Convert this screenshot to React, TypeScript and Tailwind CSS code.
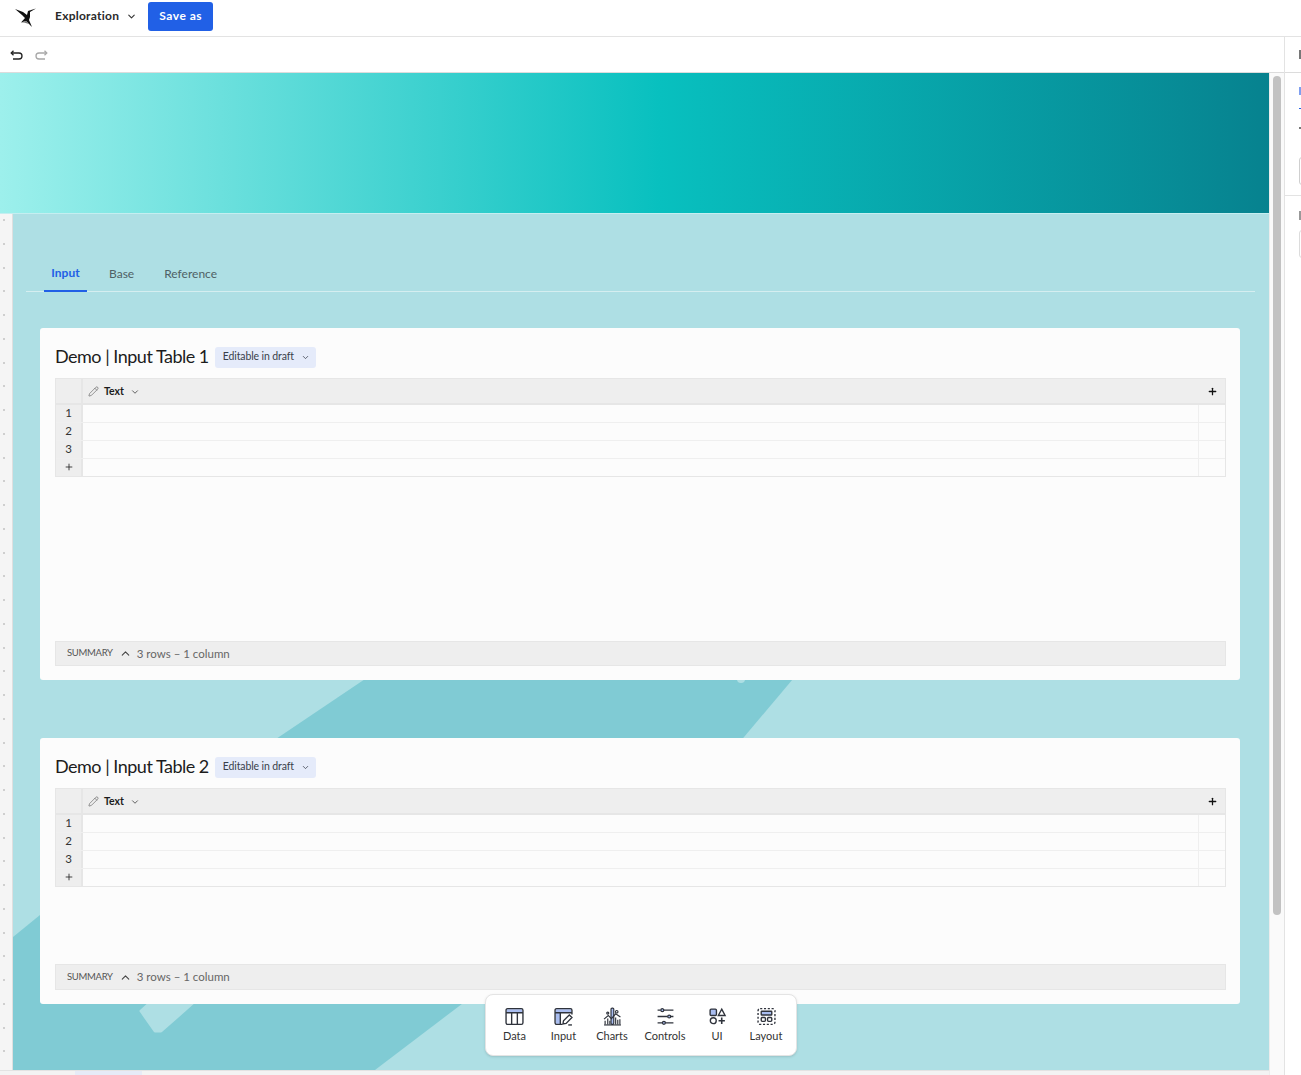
import React from 'react';
import { ChevronDown, ChevronUp, Pencil, Plus } from 'lucide-react';

const font = "font-['Lato','Noto_Sans',sans-serif]";

const Logo = () => (
    <svg width="22" height="20" viewBox="0 0 22 20" fill="none">
        <path d="M0 1 L8 4 L12 7 L13 3 L21 0.5 L15 4 L15 9 L14 12 L17 19 L14 16 L11 13 L6 14.5 L10 10 L7 7 Z" fill="#111" />
        <path d="M13 3 L21 0.5 L15 2.5 Z" fill="#555" />
        <path d="M6 14.5 L11 13 L14 16 L9 14.5 Z" fill="#777" />
    </svg>
);

const UndoIcon = ({ className }: { className: string }) => (
    <svg className={className} width="13" height="10" viewBox="0 0 13 10" fill="none" stroke="currentColor" strokeWidth="1.3">
        <path d="M1.5 3H9a3 3 0 0 1 0 6H3" />
        <path d="M3.5 0.8 L1.2 3 L3.5 5.2" />
    </svg>
);

const DataIcon = () => (
    <svg width="19" height="19" viewBox="0 0 18 18" fill="none" stroke="#2f333c" strokeWidth="1.3">
        <rect x="1.6" y="2.1" width="14.8" height="3.4" fill="#a9bdf0" stroke="none" />
        <rect x="1" y="1.5" width="16" height="15" rx="1.5" />
        <path d="M1 5.5H17M6.3 5.5V16.5M11.7 5.5V16.5" />
    </svg>
);

const InputIcon = () => (
    <svg width="19" height="19" viewBox="0 0 18 18" fill="none" stroke="#2f333c" strokeWidth="1.3">
        <rect x="1.6" y="2.1" width="14.8" height="3.4" fill="#a9bdf0" stroke="none" />
        <rect x="1.6" y="5.5" width="4.4" height="10.4" fill="#a9bdf0" stroke="none" />
        <path d="M8 16.5H2.5a1.5 1.5 0 0 1-1.5-1.5V3a1.5 1.5 0 0 1 1.5-1.5h13A1.5 1.5 0 0 1 17 3v4" />
        <path d="M1 5.5H17M6 5.5V16.5" />
        <path d="M8.5 16 L9 13 L14.5 7.5 L17 10 L11.5 15.5 Z" fill="#fff" />
        <path d="M13.5 17H17" />
    </svg>
);

const ChartsIcon = () => (
    <svg width="19" height="19" viewBox="0 0 18 18" fill="none" stroke="#2f333c" strokeWidth="1.1">
        <rect x="7.6" y="1" width="2.6" height="15.5" rx="1" fill="#a9bdf0" />
        <path d="M1 11.5 L5 8 L8 11 L12 6.5 L16.5 9.5" />
        <circle cx="13" cy="4.5" r="1.2" />
        <circle cx="4.5" cy="5.8" r="1" />
        <path d="M2 16.5V13M4.5 16.5V11M6.5 16.5V13M12 16.5V10M14 16.5V12M16 16.5V11.5" />
        <path d="M1 17H17" />
    </svg>
);

const ControlsIcon = () => (
    <svg width="19" height="19" viewBox="0 0 18 18" fill="none" stroke="#2f333c" strokeWidth="1.2">
        <path d="M1.5 3H4.5M7.5 3H16.5M1.5 9H11M14 9H16.5M1.5 15H6M9 15H16.5" />
        <circle cx="6" cy="3" r="1.4" fill="#a9bdf0" />
        <circle cx="12.5" cy="9" r="1.4" fill="#a9bdf0" />
        <circle cx="7.5" cy="15" r="1.4" fill="#a9bdf0" />
    </svg>
);

const UiIcon = () => (
    <svg width="19" height="19" viewBox="0 0 18 18" fill="none" stroke="#2f333c" strokeWidth="1.3">
        <rect x="2" y="2" width="6" height="6" rx="1" fill="#a9bdf0" />
        <path d="M13 2 L16.2 8 H9.8 Z" />
        <circle cx="5" cy="13" r="2.8" />
        <path d="M13 10V16M10 13H16" strokeWidth="1.5" />
    </svg>
);

const LayoutIcon = () => (
    <svg width="19" height="19" viewBox="0 0 18 18" fill="none" stroke="#2f333c" strokeWidth="1.3">
        <rect x="1" y="1.5" width="16" height="15" rx="2" strokeDasharray="2 1.6" />
        <rect x="4" y="4" width="10" height="3.6" rx="0.5" fill="#a9bdf0" />
        <rect x="4" y="10" width="4" height="3.6" rx="1" />
        <rect x="10" y="10" width="4" height="3.6" rx="1" />
    </svg>
);

const dockItems = [
    { label: 'Data', icon: <DataIcon />, width: 'w-[49px]' },
    { label: 'Input', icon: <InputIcon />, width: 'w-[49px]' },
    { label: 'Charts', icon: <ChartsIcon />, width: 'w-[48px]' },
    { label: 'Controls', icon: <ControlsIcon />, width: 'w-[58px]' },
    { label: 'UI', icon: <UiIcon />, width: 'w-[46px]' },
    { label: 'Layout', icon: <LayoutIcon />, width: 'w-[52px]' },
];

const rows = [
    { label: '1', cls: 'h-[18px] border-b border-[#efefef]' },
    { label: '2', cls: 'h-[18px] border-b border-[#efefef]' },
    { label: '3', cls: 'h-[18px] border-b border-[#efefef]' },
    { label: '+', cls: 'h-[17px]' },
];

const InputTable = ({ title, height, summary }: { title: string; height: string; summary: string }) => (
    <div className={`bg-[#fcfcfc] rounded-[3px] px-[15px] pr-[14px] flex flex-col ${height}`}>
        <div className="h-[50px] flex items-center gap-[6px] shrink-0 pt-[8px]">
            <h3 className="text-[18px] leading-none text-[#1c1c1c] whitespace-nowrap tracking-[-0.5px] pb-[2px]">{title}</h3>
            <span className="h-[21px] w-[101px] bg-[#e5ebfa] rounded-[3px] flex items-center pl-[8px] gap-[7px] text-[10.5px] tracking-[-0.12px] text-[#3a3f4b] whitespace-nowrap">
                Editable in draft
                <ChevronDown className="w-[9px] h-[9px]" />
            </span>
        </div>

        <div className="border border-[#e6e6e6]">
            <div className="flex h-[26px] bg-[#eeeeee] border-b-2 border-[#e6e6e6]">
                <div className="w-[27px] border-r-2 border-[#e6e6e6]" />
                <div className="flex-1 flex items-center pl-[5px] pt-[1px] gap-[5px] text-[10.5px] font-bold text-[#1c1c1c]">
                    <Pencil className="w-[11px] h-[11px] text-[#555]" strokeWidth={1.3} />
                    Text
                    <ChevronDown className="w-[10px] h-[10px] ml-[1px] text-[#444]" />
                </div>
                <div className="w-[26px] flex items-center justify-center">
                    <Plus className="w-[11px] h-[11px] text-[#111]" strokeWidth={2.8} />
                </div>
            </div>
            {rows.map((row) => (
                <div key={row.label} className={`flex ${row.cls}`}>
                    <div className="w-[27px] bg-[#eeeeee] border-r-2 border-[#e6e6e6] flex items-center justify-center text-[11.5px] text-[#333] pb-[1px]">
                        {row.label === '+' ? <Plus className="w-[10px] h-[10px] text-[#222]" strokeWidth={2} /> : row.label}
                    </div>
                    <div className="flex-1 border-r border-[#efefef]" />
                    <div className="w-[26px]" />
                </div>
            ))}
        </div>

        <div className={`mt-auto mb-[14px] ${summary} bg-[#eeeeee] border border-[#e6e6e6] flex items-center pl-[11px] text-[#666]`}>
            <span className="text-[9.5px] text-[#555] tracking-[-0.3px]">SUMMARY</span>
            <ChevronUp className="w-[13px] h-[13px] ml-[6px] text-[#444]" />
            <span className="ml-[5px] text-[11.5px]">3 rows – 1 column</span>
        </div>
    </div>
);

export default function App() {
    return (
        <div className={`${font} w-[1301px] h-[1075px] overflow-hidden bg-white flex flex-col`}>
            <header className="h-[37px] shrink-0 border-b border-[#e3e3e3] flex items-center pl-[15px] pb-[3px]">
                <div className="pt-[3px] h-[20px] flex items-center"><Logo /></div>
                <span className="ml-[18px] mb-[1px] text-[12px] font-bold text-[#2a2a2a] tracking-[0.25px]">Exploration</span>
                <ChevronDown className="w-[11px] h-[11px] ml-[7px] text-[#333]" strokeWidth={2.4} />
                <button className="ml-[11px] w-[65px] h-[29px] rounded-[3px] bg-[#2160e6] text-white text-[12px] font-bold tracking-[0.5px] pb-[1px]">
                    Save as
                </button>
            </header>

            <div className="flex-1 flex min-h-0">
                <div className="w-[1285px] shrink-0 flex flex-col border-r border-[#e3e3e3]">
                    <div className="h-[36px] shrink-0 border-b border-[#dcdcdc] flex items-center pl-[10px] gap-[12px]">
                        <UndoIcon className="text-[#222]" />
                        <UndoIcon className="text-[#a8a8a8] -scale-x-100" />
                    </div>

                    <div className="flex-1 flex min-h-0">
                        <main className="w-[1269px] shrink-0 flex flex-col relative overflow-hidden bg-[#aedfe4]">
                            <svg className="absolute left-0 top-0" width="1269" height="1002" viewBox="0 0 1269 1002">
                                <polygon points="374,600 798,600 739,670 270,670" fill="#80cbd4" />
                                <circle cx="741" cy="606" r="4" fill="#aedfe4" />
                                <polygon points="13,864 40,842 579,842 375,997 13,997" fill="#80cbd4" />
                                <polygon points="152,928 195,928 161,958 155,958 141,938" fill="#aedfe4" stroke="#aedfe4" strokeWidth="3" strokeLinejoin="round" />
                            </svg>
                            <div className="h-[141px] shrink-0 relative bg-[linear-gradient(90deg,#9df0ec_0%,#08c0bf_52%,#07828f_100%)] border-b border-[#c5eef0]" />
                            <div className="flex-1 flex min-h-0 relative">
                                <div className="w-[13px] shrink-0 bg-[#f5f5f5] border-r border-[#dfdfdf] flex flex-col gap-[21.75px] pt-[5px] pl-[3px]">
                                    {Array.from({ length: 37 }).map((_, i) => (
                                        <span key={i} className="w-[2px] h-[2px] shrink-0 bg-[#cfcfcf]" />
                                    ))}
                                </div>
                                <div className="flex-1 flex flex-col pl-[27px] pr-[29px]">
                                    <nav className="mt-[42px] h-[36px] ml-[-14px] mr-[-15px] border-b border-[#d5eef0] flex pl-[18px] text-[12px]">
                                        <span className="w-[43px] h-[36px] pb-[1px] flex items-center justify-center text-[#2160e6] font-bold border-b-2 border-[#2160e6]">Input</span>
                                        <span className="ml-[22px] h-[36px] pb-[1px] flex items-center text-[#4f6165]">Base</span>
                                        <span className="ml-[30px] h-[36px] pb-[1px] flex items-center text-[#4f6165]">Reference</span>
                                    </nav>
                                    <div className="mt-[36px] flex flex-col gap-[58px]">
                                        <InputTable title="Demo | Input Table 1" height="h-[352px]" summary="h-[25px]" />
                                        <InputTable title="Demo | Input Table 2" height="h-[266px]" summary="h-[26px]" />
                                    </div>
                                </div>
                                <div className="absolute left-[485px] top-[780px] w-[312px] h-[62px] bg-white rounded-[8px] border border-[#e4e4e4] shadow-sm flex items-center pl-[4px]">
                                    {dockItems.map((item) => (
                                        <div key={item.label} className={`${item.width} flex flex-col items-center gap-[3px]`}>
                                            {item.icon}
                                            <span className="text-[11px] leading-[14px] text-[#333]">{item.label}</span>
                                        </div>
                                    ))}
                                </div>
                            </div>
                            <div className="h-[5px] shrink-0 relative bg-[#f3f3f3] border-t border-[#e3e3e3] pl-[75px]">
                                <div className="w-[67px] h-full bg-[#e6ebf7]" />
                            </div>
                        </main>
                        <div className="w-[15px] bg-[#fafafa] border-l border-[#ececec] pl-[3px] pt-[3px]">
                            <div className="h-[839px] w-[8px] bg-[#c2c2c2] rounded-[4px]" />
                        </div>
                    </div>
                </div>

                {/* properties panel, only its left edge is in frame */}
                <aside className="flex-1 flex flex-col pl-[14px] overflow-hidden">
                    <div className="h-[36px] shrink-0 -ml-[14px] border-b border-[#dcdcdc] pl-[14px] flex items-center">
                        <span className="w-[2px] h-[9px] bg-[#777]" />
                    </div>
                    <div className="h-[36px] shrink-0 border-b border-[#2160e6] flex items-center">
                        <span className="w-[2px] h-[8px] bg-[#7f9ff0]" />
                    </div>
                    <div className="h-[87px] shrink-0 -ml-[14px] pl-[14px] border-b border-[#e3e3e3]">
                        <span className="block mt-[18px] w-[2px] h-[2px] bg-[#777]" />
                        <div className="mt-[28px] w-[4px] h-[28px] border border-[#cfcfcf] rounded-l-[3px]" />
                    </div>
                    <span className="block mt-[15px] w-[2px] h-[9px] bg-[#999]" />
                    <div className="mt-[10px] w-[4px] h-[28px] border border-[#dcdcdc] rounded-l-[3px]" />
                </aside>
            </div>
        </div>
    );
}
